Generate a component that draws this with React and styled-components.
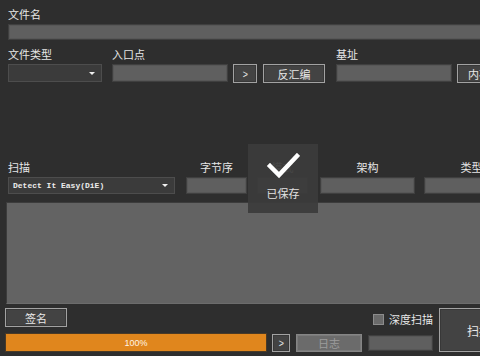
import React from 'react';
import styled, { createGlobalStyle } from 'styled-components';

const GlobalStyle = createGlobalStyle`
  html, body {
    margin: 0;
    padding: 0;
    background: #2e2e2e;
    overflow: hidden;
  }
  #root {
    width: 480px;
    height: 356px;
    overflow: hidden;
  }
`;

const Window = styled.div`
  position: relative;
  width: 525px;
  height: 356px;
  box-sizing: border-box;
  padding: 6px 0 0 5px;
  background: #2e2e2e;
  font-family: "Noto Sans CJK SC", "Noto Sans", sans-serif;
  color: #e4e4e4;
`;

const Section = styled.div`
  padding-left: 3px;
  margin-top: ${p => p.$top || 0}px;
`;

const FieldRow = styled.div`
  display: flex;
  align-items: flex-start;
`;

const Field = styled.div`
  display: flex;
  flex-direction: column;
  width: ${p => (p.$w ? `${p.$w}px` : 'auto')};
  margin-left: ${p => p.$ml || 0}px;
  flex: ${p => (p.$grow ? 1 : 'none')};
`;

const Label = styled.div`
  height: 16px;
  line-height: 16px;
  font-size: 11px;
  color: #e6e6e6;
  text-align: ${p => p.$align || 'left'};
  white-space: nowrap;
`;

const Controls = styled.div`
  display: flex;
  margin-top: 2px;
`;

const Input = styled.div`
  box-sizing: border-box;
  height: ${p => p.$h || 17}px;
  width: ${p => (p.$w ? `${p.$w}px` : 'auto')};
  flex: ${p => (p.$w ? 'none' : 1)};
  margin-left: ${p => p.$ml || 0}px;
  background: #5f5f5f;
  border: 1px solid #3f3f3f;
  box-shadow: inset 0 0 0 1px #575757;
`;

const Combo = styled.div`
  box-sizing: border-box;
  display: flex;
  align-items: center;
  justify-content: space-between;
  height: ${p => p.$h || 18}px;
  width: ${p => p.$w}px;
  padding: 0 6px 0 4px;
  background: #3b3b3b;
  border: 1px solid #4d4d4d;
  font-family: "Liberation Mono", "DejaVu Sans Mono", monospace;
  font-weight: bold;
  font-size: 8px;
  color: #ececec;
`;

const Arrow = styled.span`
  width: 0;
  height: 0;
  border-left: 3px solid transparent;
  border-right: 3px solid transparent;
  border-top: 3px solid #f0f0f0;
`;

const Button = styled.div`
  box-sizing: border-box;
  display: flex;
  align-items: center;
  justify-content: center;
  width: ${p => p.$w}px;
  height: ${p => p.$h || 19}px;
  margin-left: ${p => p.$ml || 0}px;
  background: ${p => (p.$disabled ? '#6b6b6b' : '#434343')};
  border: 1px solid ${p => (p.$disabled ? '#858585' : '#a2a2a2')};
  box-shadow: inset 0 0 0 1px ${p => (p.$disabled ? '#7a7a7a' : '#383838')};
  font-size: ${p => p.$fs || 11}px;
  color: ${p => (p.$disabled ? '#9c9c9c' : '#e8e8e8')};
  white-space: nowrap;
  flex: none;
`;

const Chevron = styled.span`
  font-family: "Liberation Sans", sans-serif;
  font-size: 11px;
  transform: scaleX(0.8);
`;

const Gap = styled.div`
  height: ${p => p.$h}px;
`;

const LogArea = styled.div`
  box-sizing: border-box;
  margin: 8px 0 0 1px;
  height: 102px;
  background: #636363;
  border: 1px solid #3c3c3c;
  border-bottom-color: #6c6c6c;
`;

const Bottom = styled.div`
  display: flex;
  align-items: flex-start;
  margin-top: 4px;
  height: 44px;
`;

const Column = styled.div`
  display: flex;
  flex-direction: column;
  width: ${p => p.$w}px;
  margin-left: ${p => p.$ml || 0}px;
`;

const Progress = styled.div`
  box-sizing: border-box;
  display: flex;
  align-items: center;
  justify-content: center;
  margin-top: 6px;
  height: 19px;
  background: #e0861d;
  border: 1px solid #4a3a26;
  font-family: "Liberation Sans", sans-serif;
  font-size: 9px;
  color: #fff4e4;
`;

const CheckRow = styled.div`
  display: flex;
  align-items: center;
  justify-content: flex-end;
  gap: 5px;
  height: 12px;
  margin-top: 5px;
  font-size: 11px;
  color: #e6e6e6;
`;

const CheckBox = styled.span`
  box-sizing: border-box;
  width: 11px;
  height: 11px;
  background: #6a6a6a;
  border: 1px solid #8c8c8c;
`;

const ActionRow = styled.div`
  display: flex;
  align-items: center;
  margin-top: 9px;
`;

const Toast = styled.div`
  position: absolute;
  left: 248px;
  top: 144px;
  width: 70px;
  height: 69px;
  box-sizing: border-box;
  display: flex;
  flex-direction: column;
  align-items: center;
  padding-top: 9px;
  background: rgba(60, 60, 60, 0.94);
  font-size: 11px;
  color: #e2e2e2;
`;

const ToastText = styled.div`
  margin-top: 7px;
  line-height: 14px;
`;

const CheckMark = () => (
  <svg width="34" height="26" viewBox="0 0 34 26">
    <path d="M4 13 L13 22 L31 3" fill="none" stroke="#ffffff" strokeWidth="4.5" strokeLinecap="square" />
  </svg>
);

export default function App() {
  return (
    <Window>
      <GlobalStyle />
      <Section>
        <Label>文件名</Label>
        <Controls>
          <Input $h={16} />
        </Controls>
      </Section>

      <Section $top={6}>
        <FieldRow>
          <Field $w={94}>
            <Label>文件类型</Label>
            <Controls>
              <Combo $w={94}>
                <span />
                <Arrow />
              </Combo>
            </Controls>
          </Field>
          <Field $ml={10}>
            <Label>入口点</Label>
            <Controls>
              <Input $w={116} $h={18} />
              <Button $w={24} $ml={5}><Chevron>&gt;</Chevron></Button>
              <Button $w={62} $ml={6}>反汇编</Button>
            </Controls>
          </Field>
          <Field $ml={11}>
            <Label>基址</Label>
            <Controls>
              <Input $w={116} $h={18} />
              <Button $w={44} $ml={5}>内存</Button>
            </Controls>
          </Field>
        </FieldRow>
      </Section>

      <Gap $h={76} />

      <Section>
        <FieldRow>
          <Field $w={167}>
            <Label>扫描</Label>
            <Controls>
              <Combo $w={167} $h={17}>
                <span>Detect It Easy(DiE)</span>
                <Arrow />
              </Combo>
            </Controls>
          </Field>
          <Field $w={61} $ml={11}>
            <Label $align="center">字节序</Label>
            <Controls><Input /></Controls>
          </Field>
          <Field $w={51} $ml={10}>
            <Label $align="center">模式</Label>
            <Controls><Input /></Controls>
          </Field>
          <Field $w={95} $ml={12}>
            <Label $align="center">架构</Label>
            <Controls><Input /></Controls>
          </Field>
          <Field $w={95} $ml={9}>
            <Label $align="center">类型</Label>
            <Controls><Input /></Controls>
          </Field>
        </FieldRow>
      </Section>

      <LogArea />

      <Bottom>
        <Column $w={262}>
          <Button $w={62} $h={19}>签名</Button>
          <Progress>100%</Progress>
        </Column>
        <Column $w={161} $ml={5}>
          <CheckRow>
            <CheckBox />
            <span>深度扫描</span>
          </CheckRow>
          <ActionRow>
            <Button $w={18} $h={18}><Chevron>&gt;</Chevron></Button>
            <Button $w={66} $h={18} $ml={6} $disabled>日志</Button>
            <Input $w={65} $h={16} $ml={6} />
          </ActionRow>
        </Column>
        <Button $w={80} $h={44} $ml={6} $fs={12}>扫描</Button>
      </Bottom>

      <Toast>
        <CheckMark />
        <ToastText>已保存</ToastText>
      </Toast>
    </Window>
  );
}
